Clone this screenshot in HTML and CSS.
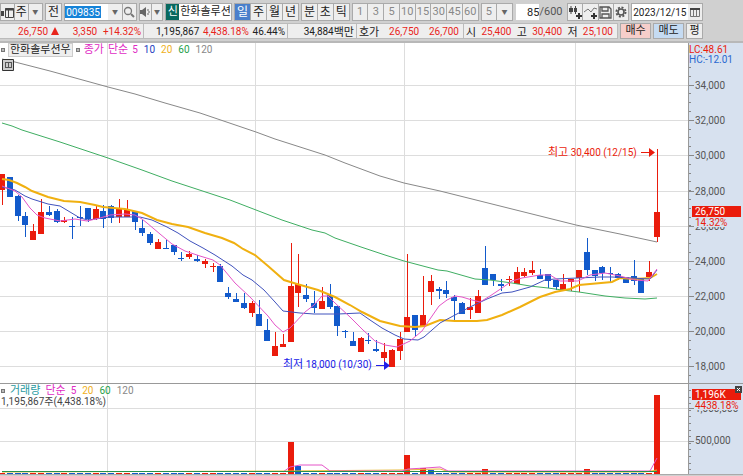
FILE: index.html
```html
<!DOCTYPE html>
<html lang="ko">
  <head>
    <meta charset="utf-8">
    <meta name="viewport" content="width=device-width, initial-scale=1.0">
    <title>한화솔루션우 일봉 차트</title>
    <link rel="stylesheet" href="styles.css">
  </head>
  <body>
    <div class="container">
      <div class="toolbar">
        <div class="group g-type">
          <button class="btn" aria-label="창 목록"><svg width="13" height="13" viewBox="0 0 13 13"><path d="M0 5h3v5H0z" fill="#444"/><path d="M4.500 2.500h8v9h-8zM7.500 4v7" fill="none" stroke="#444"/><path d="M4 3.500h9" stroke="#444" stroke-width="2"/></svg></button>
          <button class="btn">주</button>
          <button class="btn arrow" aria-label="종류 선택">▼</button>
        </div>
        <button class="btn single">전</button>
        <div class="group g-code">
          <input class="code" type="text" value="009835" aria-label="종목코드">
          <button class="btn arrow" aria-label="최근 종목">▼</button>
          <button class="btn" aria-label="검색"><svg width="12" height="12" viewBox="0 0 12 12"><circle cx="5" cy="5" r="3.500" fill="none" stroke="#777" stroke-width="1.300"/><path d="M8 8l3 3" stroke="#777" stroke-width="2"/></svg></button>
        </div>
        <div class="group g-sound">
          <button class="btn" aria-label="소리"><svg width="12" height="12" viewBox="0 0 12 12"><path d="M1 4h2l4-3v10l-4-3H1z" fill="#666"/><path d="M9 3v2M9 7v2M11 6h-2" stroke="#666"/></svg></button>
          <button class="btn arrow" aria-label="소리 설정">▼</button>
        </div>
        <div class="group g-name"><span class="badge">신</span><span class="name">한화솔루션</span></div>
        <div class="group g-period">
          <button class="btn on">일</button><button class="btn">주</button><button class="btn">월</button><button class="btn">년</button>
        </div>
        <div class="group g-unit">
          <button class="btn">분</button><button class="btn">초</button><button class="btn">틱</button>
        </div>
        <div class="group g-min">
          <button class="btn">1</button><button class="btn">3</button><button class="btn">5</button><button class="btn">10</button><button class="btn">15</button><button class="btn">30</button><button class="btn">45</button><button class="btn">60</button>
        </div>
        <div class="group g-custom"><button class="btn">5</button><button class="btn arrow" aria-label="분 선택">▼</button></div>
        <div class="group g-count"><input class="count" type="text" value="85" aria-label="봉 개수"><span class="total">/600</span></div>
        <div class="group g-tools">
          <button class="btn" aria-label="봉 추가"><svg width="14" height="14" viewBox="0 0 14 14"><path d="M3 1v8M7.500 1v8" stroke="#444"/><path d="M1 3h4v4H1zM6 3h3v4H6z" fill="#444"/><path d="M11 8v6M8 11h6" stroke="#333" stroke-width="2"/></svg></button>
          <button class="btn" aria-label="지표 추가"><svg width="14" height="14" viewBox="0 0 14 14"><path d="M0 7l4-3 3 3 3-4 3 1" fill="none" stroke="#777"/><path d="M10 8v6M7 11h6" stroke="#333" stroke-width="2"/></svg></button>
          <button class="btn" aria-label="저장"><svg width="13" height="13" viewBox="0 0 13 13"><path d="M1 1h9l2 2v9H1zM3 1v4h6V1M3 12V8h7v4" fill="none" stroke="#555" stroke-width="1.300"/></svg></button>
          <button class="btn" aria-label="설정"><svg width="12" height="12" viewBox="0 0 12 12"><circle cx="6" cy="6" r="4.600" fill="none" stroke="#555" stroke-width="1.800" stroke-dasharray="2 1.600"/><circle cx="6" cy="6" r="3" fill="none" stroke="#555" stroke-width="1.600"/></svg></button>
        </div>
        <div class="group g-date">
          <input class="date" type="text" value="2023/12/15" aria-label="조회일">
          <button class="btn" aria-label="달력"><svg width="10" height="10" viewBox="0 0 10 10"><path d="M.5 1.500h9v8h-9zM3.500 3v6M6.500 3v6" fill="none" stroke="#777"/><path d="M0 2h10" stroke="#444" stroke-width="2"/></svg></button>
        </div>
      </div>

      <div class="quote">
        <div class="cell c-price up"><span class="last">26,750<i class="tri"></i></span><span class="diff">3,350</span><span>+14.32%</span></div>
        <div class="cell c-volume"><span>1,195,867</span><span class="up">4,438.18%</span><span>46.44%</span></div>
        <div class="cell c-amount">34,884<span class="han">백만</span></div>
        <div class="cell c-ask"><span class="han">호가</span><span class="up">26,750</span><span class="up">26,700</span></div>
        <div class="cell c-ohl"><span class="han">시</span><span class="up">25,400</span><span class="han">고</span><span class="up">30,400</span><span class="han">저</span><span class="up">25,100</span></div>
        <button class="order buy">매수</button>
        <button class="order sell">매도</button>
        <button class="order avg">평</button>
      </div>

      <div class="panel price">
        <div class="legend">
          <i class="dot"></i><span class="han title">한화솔루션우</span><i class="dot"></i>
          <span class="han ma5">종가</span><span class="han ma5">단순</span>
          <span class="periods"><span class="ma5">5</span><span class="ma10">10</span><span class="ma20">20</span><span class="ma60">60</span><span class="ma120">120</span></span>
        </div>
        <svg id="price" class="chart" viewBox="0 43 743 340"></svg>
      </div>
      <div class="panel volume">
        <div class="legend">
          <i class="dot"></i><span class="han vol">거래량</span><span class="han ma5">단순</span>
          <span class="periods"><span class="ma5">5</span><span class="ma20">20</span><span class="ma60">60</span><span class="ma120">120</span></span>
          <div class="detail">1,195,867주(4,438.18%)</div>
        </div>
        <svg id="volume" class="chart" viewBox="0 384 743 91"></svg>
      </div>
    </div>
    <script src="chart.js"></script>
  </body>
</html>
```
FILE: styles.css
```css
* {
  box-sizing: border-box;
}
body {
  margin: 0;
  background-color: #d0d0d0;
}
body, button, input {
  font-family: Roboto, "Noto Sans CJK KR", sans-serif;
  font-size: 10px;
  color: #222;
}
.container {
  width: 100%;
  overflow: hidden;
}
.toolbar {
  display: flex;
  gap: 2px;
  height: 23px;
  padding: 3px 40px 0 0;
}
.toolbar > * {
  flex-basis: 0;
  min-width: 0;
}
.group {
  display: flex;
  height: 18px;
  border: 1px solid #aaa;
  background-color: #eee;
}
.btn {
  flex: 1;
  display: flex;
  align-items: center;
  justify-content: center;
  min-width: 0;
  height: 16px;
  padding: 0;
  border: 0;
  border-right: 1px solid #aaa;
  background-color: #eee;
  font-size: 12px;
  line-height: 16px;
  white-space: nowrap;
}
.btn svg {
  flex: none;
}
.btn:last-child {
  border-right: 0;
}
.btn.single {
  flex: 16;
  height: 18px;
  border: 1px solid #aaa;
}
.btn.on {
  background-color: #4a7fcb;
  color: #fff;
}
.g-type { flex: 42; }
.g-code { flex: 73; background-color: #fff; }
.g-code .btn { flex: 14; }
.g-sound { flex: 23; }
.g-name { flex: 67; background-color: #fff; }
.g-period { flex: 65; }
.g-unit { flex: 48; }
.g-min { flex: 129; }
.g-min .btn, .g-custom .btn {
  font-size: 11px;
  color: #888;
}
.g-custom { flex: 31; }
.g-count { flex: 50; border-color: #d0d0d0; background: none; }
.g-tools { flex: 62; }
.g-date { flex: 72; }
.g-date .btn { flex: 14; }
.toolbar .arrow {
  font-size: 6px;
  color: #666;
}
.code, .count, .date {
  width: 0;
  min-width: 0;
  height: 16px;
  padding: 0 0 0 1px;
  border: 0;
  background-color: #fff;
}
.code {
  flex: 44;
  color: #fff;
  background: linear-gradient(#1683d8, #1683d8) 0 2px / 36px 12px no-repeat #fff;
}
.count {
  flex: 24;
  font-size: 11px;
  text-align: right;
}
.date {
  flex: 56;
}
.total {
  flex: 26;
  font-size: 11px;
  line-height: 16px;
  color: #555;
}
.badge {
  flex: none;
  width: 13px;
  background-color: #08695f;
  color: #fff;
  font-size: 11px;
  line-height: 16px;
  text-align: center;
}
.name {
  overflow: hidden;
  padding-left: 1px;
  font-size: 11px;
  line-height: 16px;
  white-space: nowrap;
}
.quote {
  display: flex;
  height: 20px;
  padding-right: 40px;
  border-bottom: 2px solid #b8b8b8;
}
.cell {
  display: flex;
  min-width: 0;
  align-items: center;
  justify-content: space-between;
  height: 16px;
  padding: 0 2px;
  border: 1px solid #bbb;
  border-left: 0;
  background-color: #eee;
  white-space: nowrap;
}
.c-price { flex: 1 1 144px; padding-left: 18px; }
.c-volume { flex: 1 1 144px; padding-left: 12px; }
.c-amount { flex: 1 1 69px; justify-content: flex-end; }
.c-ask { flex: 1 1 107px; padding-right: 4px; }
.c-ohl { flex: 1 1 154px; padding-right: 4px; }
.last {
  display: flex;
  align-items: center;
  gap: 3px;
}
.diff {
  margin-left: 8px;
}
.tri {
  border: 4px solid transparent;
  border-top: 0;
  border-bottom: 8px solid #e8251c;
}
.han {
  font-size: 11px;
}
.up {
  color: #e8251c;
}
.order {
  flex: 1 1 31px;
  min-width: 0;
  height: 16px;
  margin-left: 2px;
  padding: 0;
  border: 1px solid #aaa;
  font-size: 11px;
  line-height: 14px;
}
.buy { background-color: #f6ceca; }
.sell { background-color: #c5dbf2; }
.avg { flex-basis: 17px; background-color: #eee; }
.panel {
  position: relative;
  background-color: #fff;
}
.volume {
  border-top: 1px solid #999;
}
.chart {
  display: block;
  width: 100%;
  height: auto;
}
.legend {
  position: absolute;
  top: 1px;
  left: 1px;
  display: flex;
  flex-wrap: wrap;
  align-items: center;
  column-gap: 4px;
  line-height: 12px;
}
.volume .legend {
  column-gap: 5px;
}
.periods {
  display: flex;
  gap: 6px;
}
.dot {
  width: 4px;
  height: 4px;
  border: 1px solid #777;
  background-color: #bbb;
}
.title {
  padding: 0 1px;
  background-color: #eee;
  outline: 1px solid #ccc;
}
.detail {
  width: 100%;
  line-height: 10px;
  color: #444;
}
.vol { color: #2a9aa0; }
.ma5 { color: #e02bc4; }
.ma10 { color: #2440c0; }
.ma20 { color: #efb01c; }
.ma60 { color: #26a04a; }
.ma120 { color: #888; }
.axis-label {
  font-size: 10px;
  fill: #555;
}
.mark {
  font-size: 10px;
}
```
FILE: chart.js
```js
var RED = '#ea1c0c'
var BLUE = '#125acb'

// color, high, body top, body bottom, low
var candles = [
  ['r', 174, 174, 190, 205], ['b', 177, 177, 197, 197], ['b', 195, 196, 216, 221], ['b', 212, 216, 225, 237],
  ['r', 224, 231, 240, 240], ['r', 199, 212, 234, 234], ['b', 206, 212, 215, 216], ['b', 209, 211, 222, 223],
  ['r', 217, 220, 222, 223], ['b', 217, 226, 227, 239], ['b', 206, 217, 218, 226], ['b', 208, 208, 219, 222],
  ['r', 205, 209, 219, 220], ['b', 205, 211, 219, 228], ['b', 205, 206, 218, 223], ['r', 199, 209, 217, 223],
  ['r', 200, 210, 217, 217], ['b', 211, 211, 222, 230], ['b', 220, 228, 233, 236], ['b', 232, 234, 243, 245],
  ['r', 239, 242, 249, 249], ['b', 240, 248, 249, 249], ['b', 245, 245, 252, 255], ['b', 252, 258, 259, 261],
  ['r', 251, 254, 257, 259], ['b', 255, 259, 261, 262], ['r', 259, 261, 264, 268], ['r', 263, 266, 267, 272],
  ['b', 264, 266, 282, 282], ['b', 287, 293, 297, 299], ['b', 293, 299, 302, 302], ['b', 293, 303, 308, 309],
  ['r', 301, 303, 313, 317], ['b', 300, 314, 326, 326], ['b', 319, 330, 341, 341], ['r', 332, 346, 356, 356],
  ['r', 334, 344, 347, 347], ['r', 243, 286, 342, 342], ['r', 254, 284, 293, 307], ['b', 284, 295, 299, 302],
  ['b', 291, 303, 308, 313], ['r', 287, 301, 309, 309], ['b', 284, 295, 307, 309], ['b', 306, 306, 326, 336],
  ['b', 330, 331, 332, 338], ['b', 332, 341, 346, 346], ['r', 337, 338, 352, 352], ['b', 333, 340, 341, 344],
  ['b', 340, 349, 351, 352], ['r', 343, 352, 358, 362], ['r', 349, 350, 367, 367], ['r', 332, 339, 351, 360],
  ['r', 254, 317, 332, 332], ['b', 315, 315, 330, 336], ['r', 276, 315, 326, 326], ['r', 275, 281, 292, 305],
  ['b', 287, 289, 291, 299], ['b', 281, 290, 294, 298], ['b', 295, 297, 301, 320], ['b', 302, 303, 314, 314],
  ['r', 298, 307, 310, 319], ['r', 290, 296, 313, 313], ['b', 246, 268, 285, 285], ['b', 274, 274, 280, 286],
  ['b', 279, 284, 286, 291], ['r', 276, 279, 280, 286], ['r', 267, 272, 284, 284], ['r', 268, 272, 276, 277],
  ['r', 261, 270, 273, 275], ['b', 269, 275, 279, 279], ['b', 274, 274, 281, 288], ['b', 280, 280, 287, 290],
  ['r', 274, 284, 290, 290], ['r', 279, 279, 282, 291], ['r', 270, 270, 278, 292], ['b', 238, 252, 270, 275],
  ['b', 270, 270, 276, 281], ['b', 266, 267, 273, 280], ['b', 267, 273, 274, 283], ['b', 273, 274, 278, 280],
  ['b', 277, 277, 283, 283], ['b', 260, 276, 281, 285], ['b', 278, 278, 293, 293], ['r', 261, 272, 277, 281],
  ['r', 149, 212, 237, 242]
]

var averages = [
  ['#888', 1, '2,59 15,62 50,71 108,87 135,94 165,103 200,113 256,132 275,139 325,155 345,163 380,176 404,183 440,191 480,201 540,216 576,225 620,234 657,242'],
  ['#3fae62', 1, '2,123 12,126 22,130 60,142 108,158 142,170 172,181 230,200 282,220 312,230 325,233 335,238 361,247 385,255 404,261 438,270 447,271 475,279 490,280 512,283 530,286 548,288 562,290 579,292 605,296 625,298 645,299 657,298'],
  ['#f0b010', 2, '2,179 9,180 17,183 25,187 32,191 48,197 64,201 80,202 95,205 103,207 125,209 142,213 157,220 172,224 188,227 205,233 222,238 234,243 243,249 255,255 268,266 284,280 297,284 318,290 335,297 350,305 362,312 380,321 400,326 415,327 425,326 440,320 455,321 477,321 487,320 502,315 520,307 540,297 555,292 570,289 579,285 612,282 620,278 635,279 650,278 657,274'],
  ['#4052bd', 1, '2,187 15,190 25,196 32,199 48,204 60,206 70,212 80,218 88,220 110,217 140,217 152,220 167,227 178,233 190,241 203,248 215,255 232,266 243,275 252,280 264,290 275,302 283,311 300,313 314,314 338,314 360,313 370,320 382,328 395,335 404,339 418,340 424,337 440,323 455,315 470,307 487,299 502,293 512,292 530,287 545,280 555,279 600,277 612,277 650,279 657,270'],
  ['#e455c8', 1, '2,186 15,191 22,197 30,208 37,215 45,218 60,221 75,219 87,221 100,218 110,215 125,214 135,215 142,219 147,223 160,234 172,244 185,251 200,256 213,260 220,265 235,283 250,297 268,316 275,325 283,332 290,328 305,312 314,305 322,296 328,296 335,303 350,317 363,330 375,341 385,345 397,347 410,341 422,331 430,319 439,306 447,300 455,296 462,297 472,300 480,302 490,296 502,288 512,281 522,278 540,275 550,275 560,281 578,281 590,275 605,273 620,276 635,280 648,281 657,269']
]

// candle index -> color and top of the volume bar
var volumes = {
  37: ['r', 442],
  38: ['b', 466],
  52: ['r', 455],
  54: ['r', 468],
  55: ['b', 470],
  62: ['r', 469],
  75: ['r', 469],
  84: ['r', 395]
}

var rect = function (x, y, w, h, fill) {
  return '<rect x="' + x + '" y="' + y + '" width="' + w + '" height="' + h + '" fill="' + fill + '"/>'
}
var text = function (x, y, str, fill, cls) {
  return '<text class="' + (cls || 'axis-label') + '" x="' + x + '" y="' + y + '"' + (fill ? ' style="fill:' + fill + '"' : '') + '>' + str + '</text>'
}
var polyline = function (color, width, points) {
  return '<polyline fill="none" stroke="' + color + '" stroke-width="' + width + '" points="' + points + '"/>'
}
var candleX = function (i) {
  return Math.round(2 + i * 655 / 84)
}
var frame = function (top, bottom, lines) {
  var out = ''
  lines.forEach(function (y) {
    out += rect(0, y, 688, 1, '#ddd')
  })
  ;[107, 255, 404, 575].forEach(function (x) {
    out += rect(x, top, 1, bottom - top, '#ddd')
  })
  out += rect(688, top, 55, bottom - top, '#d7e1ef')
  return out + rect(688, top, 1, bottom - top, '#999')
}

var drawPrice = function () {
  var levels = [85, 120, 155, 191, 226, 261, 296, 331, 366]
  var out = frame(43, 383, levels)
  for (var t = 0; t < 36; t++) {
    out += rect(689, Math.round(67 + t * 8.8), 2, 1, '#888')
  }
  levels.forEach(function (y, i) {
    out += rect(689, y, 5, 1, '#888') + text(695, y + 4, (34 - i * 2) + ',000')
  })
  candles.forEach(function (c, i) {
    var x = candleX(i)
    var color = c[0] === 'r' ? RED : BLUE
    out += rect(x, c[1], 1, c[4] - c[1], color)
    out += rect(x - 3, c[2], 6, Math.max(1, c[3] - c[2]), color)
  })
  averages.forEach(function (a) {
    out += polyline(a[0], a[1], a[2])
  })
  out += text(548, 156, '<tspan class="han">최고</tspan> 30,400 (12/15)', RED, 'mark')
  out += '<path d="M641 152.500h8" stroke="' + RED + '"/><path d="M649 148v9l6-4.500z" fill="' + RED + '"/>'
  out += text(283, 368, '<tspan class="han">최저</tspan> 18,000 (10/30)', '#2020e8', 'mark')
  out += '<path d="M376 365.500h8" stroke="#2020e8"/><path d="M384 361v9l6-4.500z" fill="#2020e8"/>'
  out += '<path d="M2.500 59.500h11v11h-11z" fill="#ccc" stroke="#333"/><path d="M5 62.500h7M5 67.500h7M5.500 62v6M8.500 62v6M11.500 62v6" stroke="#555"/>'
  out += text(689, 53, 'LC:48.61', RED) + text(689, 63, 'HC:-12.01', '#2a68d0')
  out += rect(694, 218, 40, 9, '#d7e1ef') + rect(692, 206, 49, 11, RED)
  out += text(695, 215, '26,750', '#fff') + text(695, 226, '14.32%', RED)
  document.getElementById('price').innerHTML = out
}

var drawVolume = function () {
  var out = frame(384, 475, [408, 441])
  for (var t = 0; t < 13; t++) {
    out += rect(689, Math.round(390 + t * 6.6), 2, 1, '#888')
  }
  out += rect(689, 408, 5, 1, '#888') + rect(689, 441, 5, 1, '#888')
  out += text(695, 412, '1,000,000') + text(695, 444, '500,000')
  candles.forEach(function (c, i) {
    var bar = volumes[i] || [c[0], 473]
    out += rect(candleX(i) - 3, bar[1], 6, 474 - bar[1], bar[0] === 'r' ? RED : BLUE)
  })
  out += polyline('#e8b830', 1, '2,472 290,471 400,470 440,469 450,472 645,472 657,470')
  out += polyline('#e455c8', 1, '283,472 290,467 300,465 322,465 330,471 402,471 408,469 425,468 440,467 448,471 650,471 657,458')
  out += polyline('#27914a', 1, '2,471.5 657,471.5')
  out += rect(0, 474, 743, 1, '#aaa')
  out += rect(694, 401, 48, 9, '#d7e1ef') + rect(692, 389, 49, 11, RED)
  out += text(695, 398, '1,196K', '#fff') + text(695, 409, '4438.18%', RED)
  out += rect(735, 386, 7, 7, '#444') + '<path d="M737 388l3 3M740 388l-3 3" stroke="#fff"/>'
  document.getElementById('volume').innerHTML = out
}

drawPrice()
drawVolume()
```
